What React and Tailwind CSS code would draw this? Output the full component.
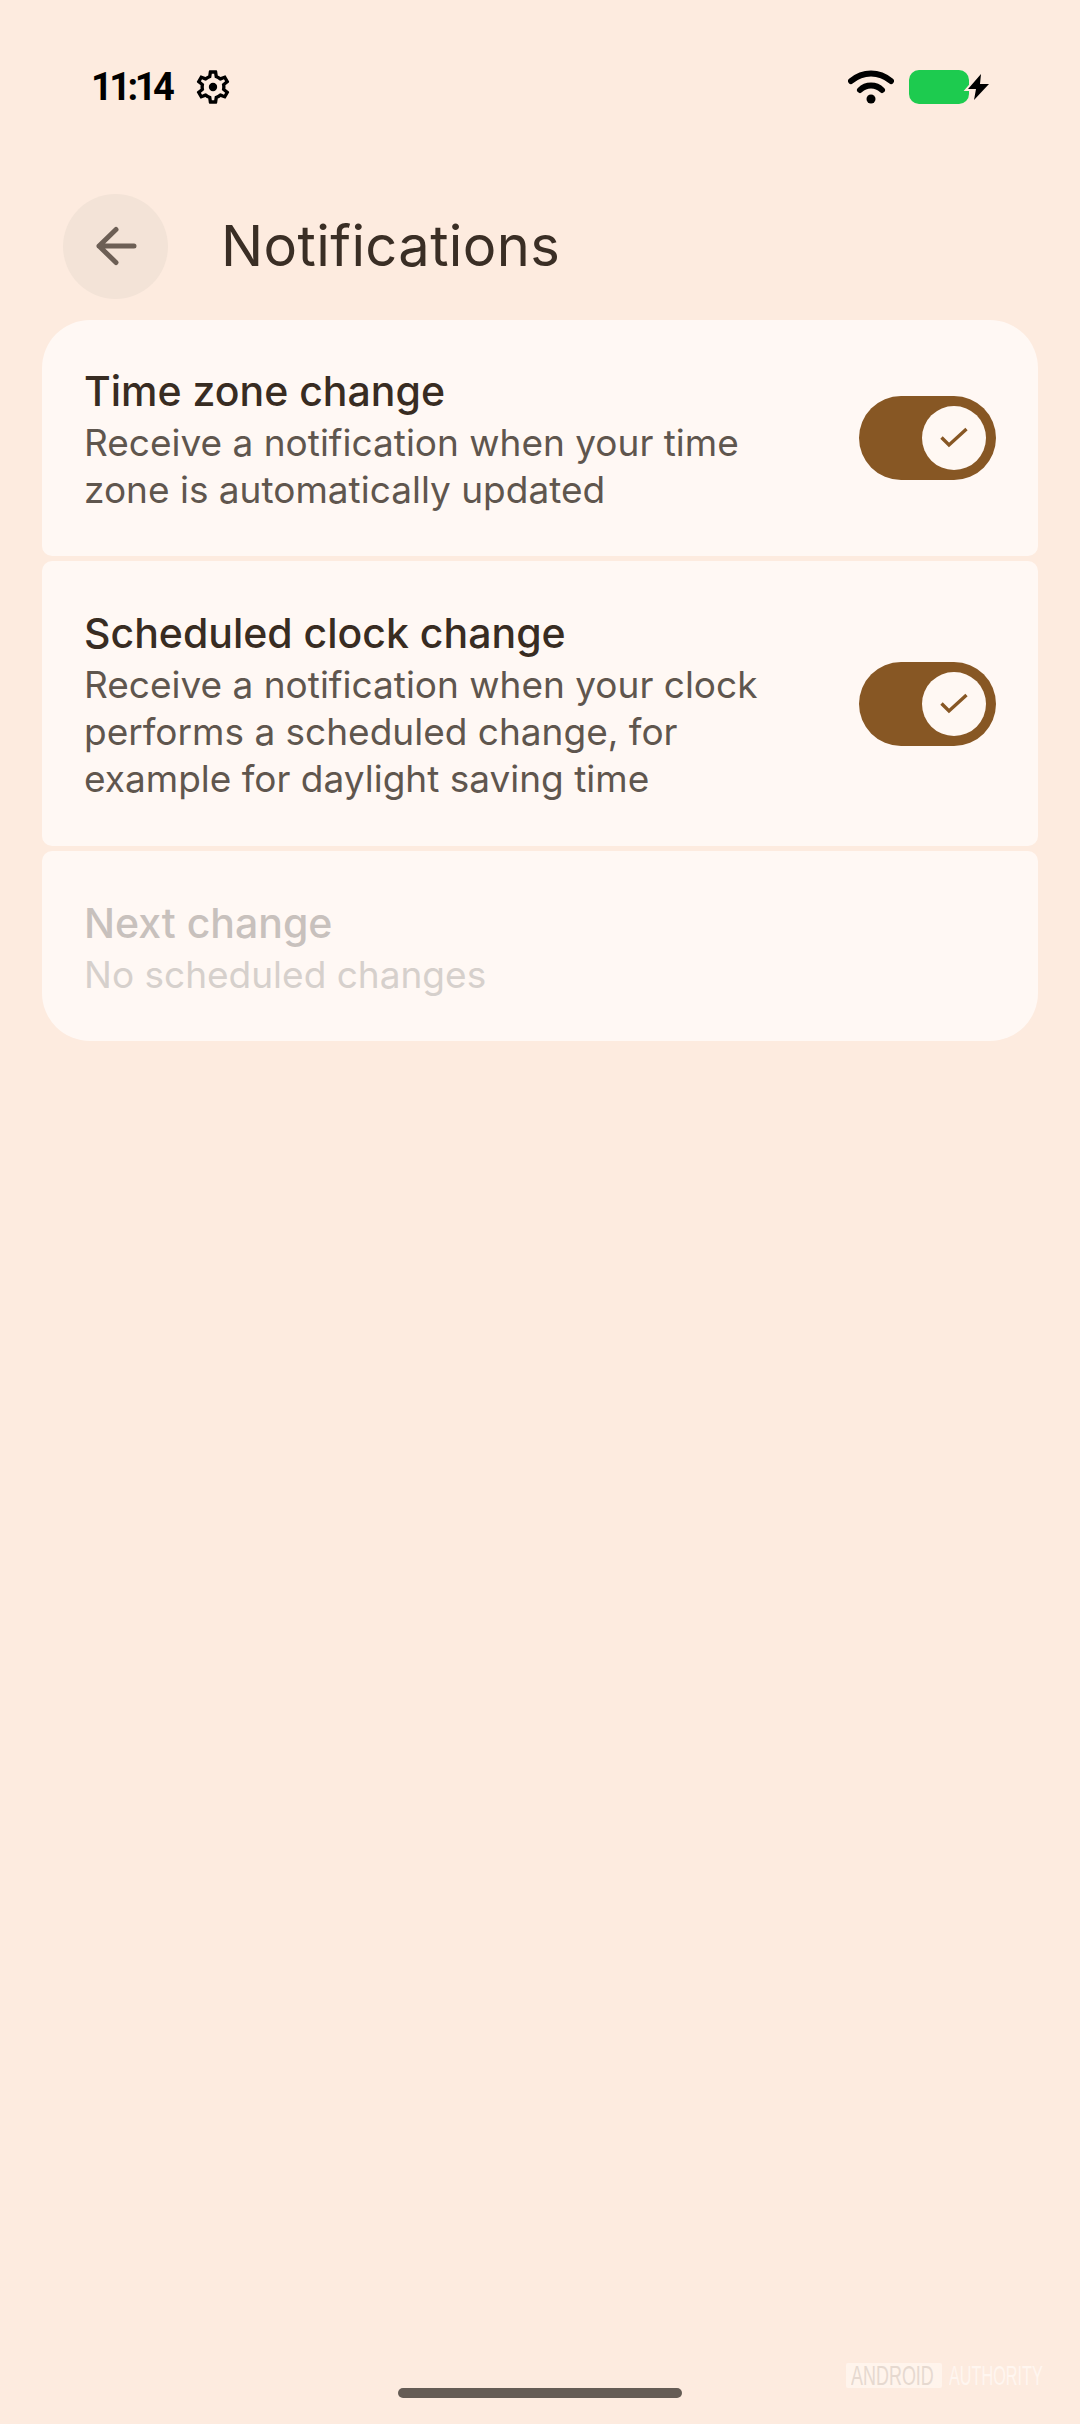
import React from "react";

const font = { fontFamily: 'Inter, sans-serif' };

function Toggle() {
  return (
    <div className="w-[137px] h-[84px] rounded-full bg-[#875724] flex items-center justify-end pr-[10px] shrink-0">
      <div className="w-[64px] h-[64px] rounded-full bg-[#fff8f3] flex items-center justify-center">
        <svg width="30" height="24" viewBox="0 0 30 24" fill="none">
          <path d="M2.500 11.500L10 19L27.500 3" stroke="#875724" strokeWidth="3.400" />
        </svg>
      </div>
    </div>
  );
}

function Row({ title, lines, on, className, disabled }) {
  return (
    <div className={"bg-[#fff8f4] flex items-center justify-between pl-[42px] pr-[42px] " + className}>
      <div>
        <div className={"text-[41px] leading-[53px] mt-[2px] mb-[1px] font-medium " + (disabled ? "text-[#c8c1bd]" : "text-[#382c22]")}>
          {title}
        </div>
        {lines.map((line) => (
          <div key={line} className={"text-[37px] leading-[47px] " + (disabled ? "text-[#d6d0cc]" : "text-[#5f564e]")}>
            {line}
          </div>
        ))}
      </div>
      {on && <Toggle />}
    </div>
  );
}

export default function App() {
  return (
    <div className="relative w-[1080px] h-[2424px] bg-[#fdebdf] flex flex-col overflow-hidden" style={font}>
      <div className="h-[174px] flex items-center justify-between pl-[91px] pr-[91px] shrink-0">
        <div className="flex items-center gap-[20px]">
          <span className="w-[82px] text-[38px] font-bold text-black tracking-[-3.5px] whitespace-nowrap" style={{ fontFamily: "Roboto, sans-serif" }}>11:14</span>
          <svg width="40" height="40" viewBox="0 0 24 24" fill="#000">
            <path d="M19.430 12.980c.04-.32.07-.64.07-.98 0-.34-.03-.66-.07-.98l2.110-1.650c.19-.15.24-.42.12-.64l-2-3.460c-.12-.22-.39-.3-.61-.22l-2.490 1c-.52-.4-1.080-.73-1.690-.98l-.38-2.650C14.460 2.180 14.250 2 14 2h-4c-.25 0-.46.18-.49.42l-.38 2.650c-.61.25-1.170.59-1.690.98l-2.490-1c-.23-.09-.49 0-.61.22l-2 3.460c-.13.22-.07.49.12.64l2.110 1.650c-.04.32-.07.65-.07.98 0 .33.03.66.07.98l-2.110 1.650c-.19.15-.24.42-.12.64l2 3.460c.12.22.39.3.61.22l2.490-1c.52.4 1.080.73 1.690.98l.38 2.650c.03.24.24.42.49.42h4c.25 0 .46-.18.49-.42l.38-2.650c.61-.25 1.170-.59 1.690-.98l2.490 1c.23.09.49 0 .61-.22l2-3.460c.12-.22.07-.49-.12-.64l-2.110-1.650zM17.450 11.270c.04.31.05.52.05.73 0 .21-.02.43-.05.73l-.14 1.130.89.7 1.080.84-.7 1.210-1.270-.51-1.040-.42-.9.68c-.43.32-.84.56-1.250.73l-1.060.43-.16 1.130-.2 1.350h-1.400l-.19-1.350-.16-1.130-1.060-.43c-.43-.18-.83-.41-1.230-.71l-.91-.7-1.060.43-1.270.51-.7-1.210 1.080-.84.89-.7-.14-1.130c-.03-.31-.05-.54-.05-.74s.02-.43.05-.73l.14-1.130-.89-.7-1.080-.84.7-1.210 1.270.51 1.040.42.9-.68c.43-.32.84-.56 1.250-.73l1.060-.43.16-1.130.2-1.350h1.390l.19 1.350.16 1.130 1.060.43c.43.18.83.41 1.230.71l.91.7 1.060-.43 1.270-.51.7 1.210-1.070.85-.89.7.14 1.130z" />
            <circle cx="12" cy="12" r="2.500" />
          </svg>
        </div>
        <div className="flex items-center gap-[15px]">
          <svg width="46" height="34" viewBox="0 0 46 34" fill="none">
            <path d="M3 11C15 1 31 1 43 11" stroke="#000" strokeWidth="6" strokeLinecap="round" />
            <path d="M12 20C18 14 28 14 34 20" stroke="#000" strokeWidth="6" strokeLinecap="round" />
            <circle cx="23" cy="29" r="4.500" fill="#000" />
          </svg>
          <div className="relative w-[80px] h-[34px]">
            <div className="w-[60px] h-[34px] rounded-[10px] bg-[#1dcb4f]" />
            <svg className="absolute left-[59px] top-[4px] overflow-visible" width="22" height="26" viewBox="0 0 22 26">
              <path d="M13 0L0 15H8L6 26L21 10H12Z" fill="#000" stroke="#fdebdf" strokeWidth="4" paintOrder="stroke" />
            </svg>
          </div>
        </div>
      </div>

      <div className="h-[146px] flex items-center pl-[63px] shrink-0">
        <div className="w-[105px] h-[105px] rounded-full bg-[#f3e3d7] flex items-center justify-center -mt-[2px]">
          <svg width="44" height="42" viewBox="0 0 44 42" fill="none">
            <path d="M22 4.500L5 21L22 37.500M5 21H40" stroke="#6c5f55" strokeWidth="5" strokeLinecap="round" strokeLinejoin="round" />
          </svg>
        </div>
        <h1 className="ml-[53px] -mt-[2px] text-[56px] leading-[64px] font-normal text-[#3a2e25] tracking-[0.4px]">Notifications</h1>
      </div>

      <div className="mx-[42px] flex flex-col gap-[5px]">
        <Row
          title="Time zone change"
          lines={["Receive a notification when your time", "zone is automatically updated"]}
          on
          className="h-[236px] rounded-t-[48px] rounded-b-[10px]"
        />
        <Row
          title="Scheduled clock change"
          lines={["Receive a notification when your clock", "performs a scheduled change, for", "example for daylight saving time"]}
          on
          className="h-[285px] rounded-[10px]"
        />
        <Row
          title="Next change"
          lines={["No scheduled changes"]}
          disabled
          className="h-[190px] rounded-t-[10px] rounded-b-[48px]"
        />
      </div>

      <div className="mt-auto mb-[26px] mx-auto w-[284px] h-[10px] rounded-full bg-[#655c55]" />

      <div className="absolute left-[846px] top-[2363px] h-[25px] flex items-center gap-[7px] text-[28px] leading-[25px]" style={{ fontFamily: '"Liberation Sans", sans-serif' }}>
        <div className="w-[96px] h-[25px] bg-[#fff4ec] rounded-[2px]">
          <span className="block w-[60px] pl-[8px] text-[#e6d9d0] scale-x-[0.64] origin-left whitespace-nowrap">ANDROID</span>
        </div>
        <div className="w-[96px] h-[25px]">
          <span className="block w-[96px] text-[#fff6f0] scale-x-[0.58] origin-left whitespace-nowrap">AUTHORITY</span>
        </div>
      </div>
    </div>
  );
}
